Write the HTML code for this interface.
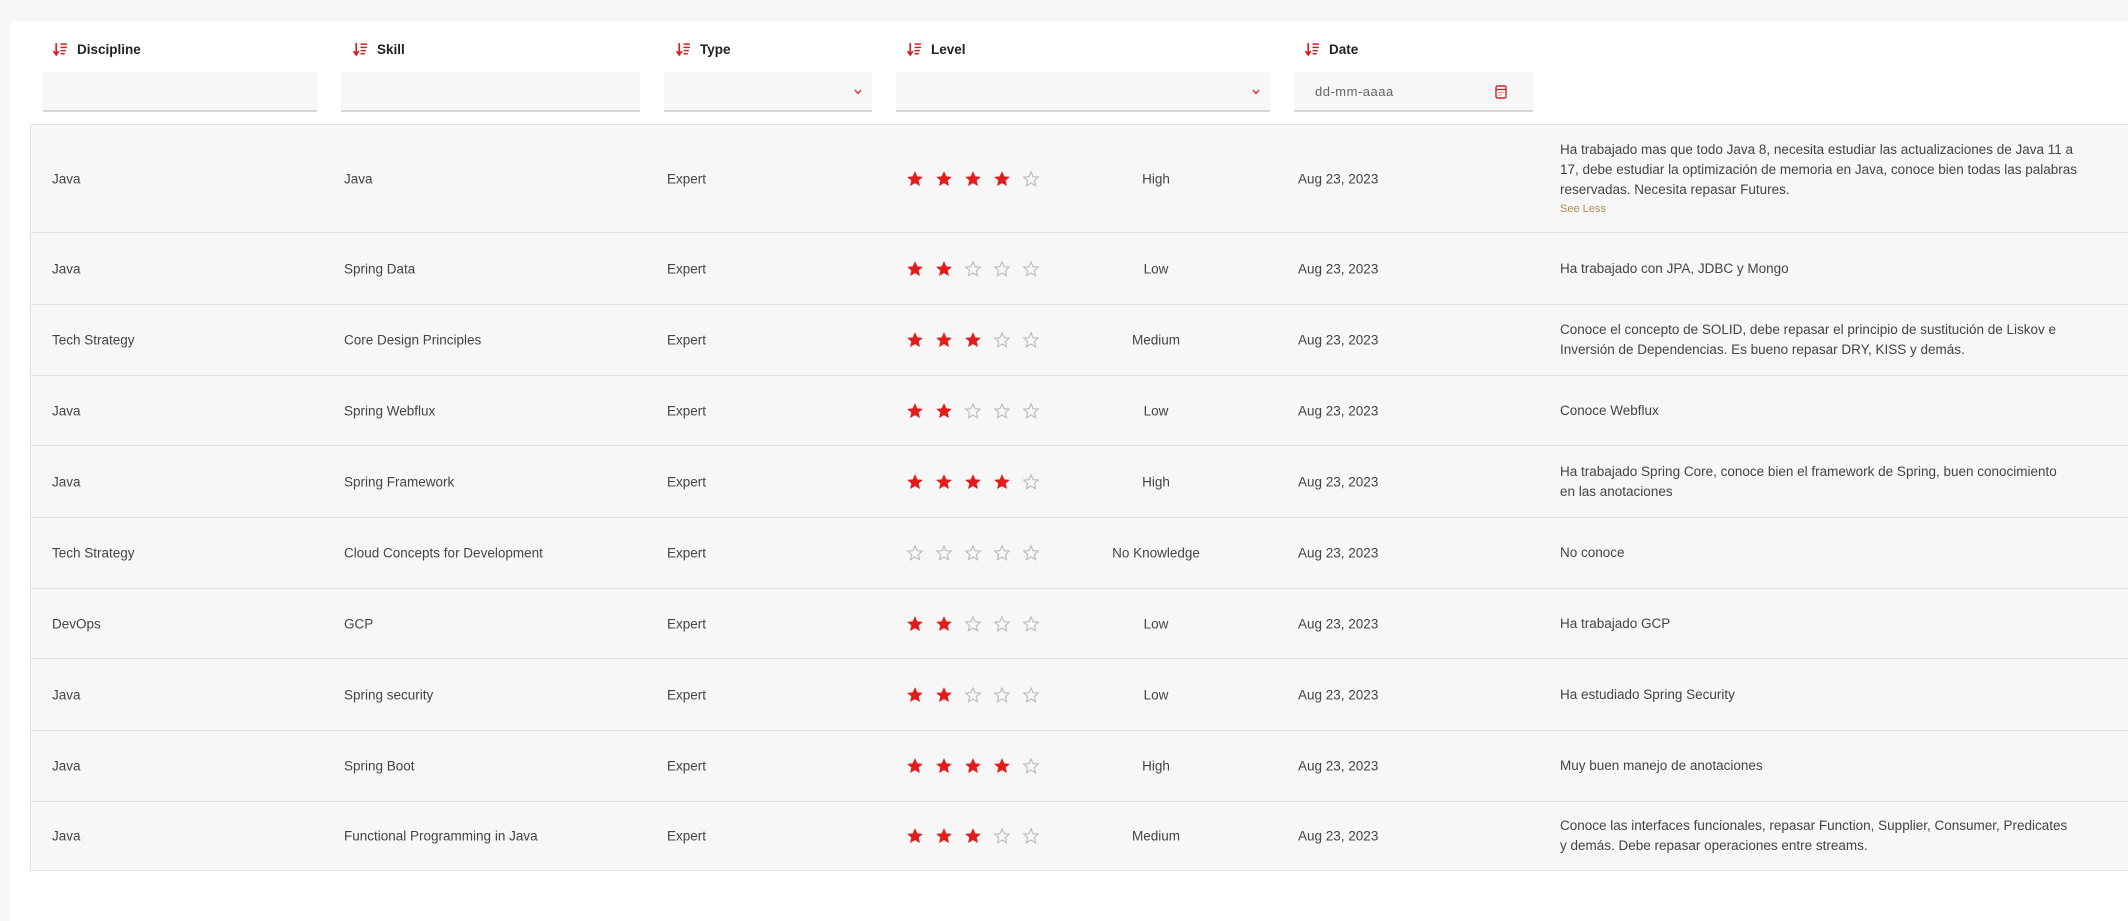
<!DOCTYPE html>
<html><head><meta charset="utf-8"><style>
*{margin:0;padding:0;box-sizing:border-box}
body{width:2128px;height:878px;background:#f7f7f7;font-family:"Liberation Sans",sans-serif;color:#333;position:relative;overflow:hidden}
.card{position:absolute;left:10px;top:21px;width:2200px;height:900px;background:#fff}
.h{position:absolute;top:42px;font-size:13.5px;font-weight:bold;color:#222;display:flex;align-items:center}
.h svg{margin-right:9px}
.inp{position:absolute;top:72px;height:40px;background:#f7f7f7;border-bottom:2px solid #d6d6d6}
.row{position:absolute;left:30px;width:2200px;background:#f7f7f7;border:1px solid #e2e2e2;border-bottom:none;font-size:13.5px;color:#444}
.row>div{position:absolute;top:50%;transform:translateY(-50%)}
.c1{left:21px}.c2{left:313px}.c3{left:636px}.c5{left:1080px;width:90px;text-align:center}.c6{left:1267px}.c7{left:1529px;width:521px;line-height:20px}
.stars{left:875px;display:flex;gap:11px}
.see{font-size:11px;color:#b08a55;display:block;line-height:18px}
</style></head><body>
<div class="card"></div>
<svg width="0" height="0" style="position:absolute"><defs>
<symbol id="sort" viewBox="0 0 14 14"><path d="M3 1v10M0.5 8.5L3 12l2.5-3.5" stroke="#d71f26" stroke-width="1.6" fill="none"/><path d="M7 2h6M7 5h6M7 8h5M7 11h4" stroke="#d71f26" stroke-width="1.4"/></symbol>
<symbol id="sf" viewBox="0 0 24 24"><path d="M12 1.5l3.1 7 7.4.6-5.6 4.9 1.7 7.4L12 17.5l-6.6 3.9 1.7-7.4L1.5 9.1l7.4-.6z" fill="#e41b1b"/></symbol>
<symbol id="se" viewBox="0 0 24 24"><path d="M12 2.5l2.8 6.4 6.9.6-5.2 4.6 1.6 6.8L12 17.3l-6.1 3.6 1.6-6.8-5.2-4.6 6.9-.6z" fill="none" stroke="#bbb" stroke-width="1.5"/></symbol>
</defs></svg>
<div class="h" style="left:53px"><svg width="15" height="15"><use href="#sort"/></svg>Discipline</div>
<div class="h" style="left:353px"><svg width="15" height="15"><use href="#sort"/></svg>Skill</div>
<div class="h" style="left:676px"><svg width="15" height="15"><use href="#sort"/></svg>Type</div>
<div class="h" style="left:907px"><svg width="15" height="15"><use href="#sort"/></svg>Level</div>
<div class="h" style="left:1305px"><svg width="15" height="15"><use href="#sort"/></svg>Date</div>
<div class="inp" style="left:43px;width:274px"></div>
<div class="inp" style="left:341px;width:299px"></div>
<div class="inp" style="left:664px;width:208px"><svg style="position:absolute;right:10px;top:17px" width="8" height="6" viewBox="0 0 8 6"><path d="M1 1l3 3.5L7 1" stroke="#d71f26" stroke-width="1.3" fill="none"/></svg></div>
<div class="inp" style="left:896px;width:374px"><svg style="position:absolute;right:10px;top:17px" width="8" height="6" viewBox="0 0 8 6"><path d="M1 1l3 3.5L7 1" stroke="#d71f26" stroke-width="1.3" fill="none"/></svg></div>
<div class="inp" style="left:1294px;width:239px"><span style="position:absolute;left:21px;top:12px;color:#666;font-family:'Liberation Sans',sans-serif;font-size:13px;letter-spacing:0.5px">dd-mm-aaaa</span><svg style="position:absolute;right:26px;top:13px" width="12" height="14" viewBox="0 0 12 14"><rect x="1" y="1" width="10" height="12" rx="1.5" fill="none" stroke="#d71f26" stroke-width="1.4"/><path d="M1 4.5h10" stroke="#d71f26" stroke-width="1.4"/><path d="M3.5 7.5h1M5.5 7.5h1M7.5 7.5h1M3.5 10h1M5.5 10h1" stroke="#d71f26"/></svg></div>

<div class="row" style="top:124px;height:108px"><div class="c1">Java</div><div class="c2">Java</div><div class="c3">Expert</div><div class="stars"><svg width="18" height="18"><use href="#sf"/></svg><svg width="18" height="18"><use href="#sf"/></svg><svg width="18" height="18"><use href="#sf"/></svg><svg width="18" height="18"><use href="#sf"/></svg><svg width="18" height="18"><use href="#se"/></svg></div><div class="c5">High</div><div class="c6">Aug 23, 2023</div><div class="c7">Ha trabajado mas que todo Java 8, necesita estudiar las actualizaciones de Java 11 a 17, debe estudiar la optimización de memoria en Java, conoce bien todas las palabras reservadas. Necesita repasar Futures.<span class="see">See Less</span></div></div>

<div class="row" style="top:232px;height:72px"><div class="c1">Java</div><div class="c2">Spring Data</div><div class="c3">Expert</div><div class="stars"><svg width="18" height="18"><use href="#sf"/></svg><svg width="18" height="18"><use href="#sf"/></svg><svg width="18" height="18"><use href="#se"/></svg><svg width="18" height="18"><use href="#se"/></svg><svg width="18" height="18"><use href="#se"/></svg></div><div class="c5">Low</div><div class="c6">Aug 23, 2023</div><div class="c7">Ha trabajado con JPA, JDBC y Mongo</div></div>

<div class="row" style="top:304px;height:71px"><div class="c1">Tech Strategy</div><div class="c2">Core Design Principles</div><div class="c3">Expert</div><div class="stars"><svg width="18" height="18"><use href="#sf"/></svg><svg width="18" height="18"><use href="#sf"/></svg><svg width="18" height="18"><use href="#sf"/></svg><svg width="18" height="18"><use href="#se"/></svg><svg width="18" height="18"><use href="#se"/></svg></div><div class="c5">Medium</div><div class="c6">Aug 23, 2023</div><div class="c7">Conoce el concepto de SOLID, debe repasar el principio de sustitución de Liskov e Inversión de Dependencias. Es bueno repasar DRY, KISS y demás.</div></div>

<div class="row" style="top:375px;height:70px"><div class="c1">Java</div><div class="c2">Spring Webflux</div><div class="c3">Expert</div><div class="stars"><svg width="18" height="18"><use href="#sf"/></svg><svg width="18" height="18"><use href="#sf"/></svg><svg width="18" height="18"><use href="#se"/></svg><svg width="18" height="18"><use href="#se"/></svg><svg width="18" height="18"><use href="#se"/></svg></div><div class="c5">Low</div><div class="c6">Aug 23, 2023</div><div class="c7">Conoce Webflux</div></div>

<div class="row" style="top:445px;height:72px"><div class="c1">Java</div><div class="c2">Spring Framework</div><div class="c3">Expert</div><div class="stars"><svg width="18" height="18"><use href="#sf"/></svg><svg width="18" height="18"><use href="#sf"/></svg><svg width="18" height="18"><use href="#sf"/></svg><svg width="18" height="18"><use href="#sf"/></svg><svg width="18" height="18"><use href="#se"/></svg></div><div class="c5">High</div><div class="c6">Aug 23, 2023</div><div class="c7">Ha trabajado Spring Core, conoce bien el framework de Spring, buen conocimiento<br>en las anotaciones</div></div>

<div class="row" style="top:517px;height:71px"><div class="c1">Tech Strategy</div><div class="c2">Cloud Concepts for Development</div><div class="c3">Expert</div><div class="stars"><svg width="18" height="18"><use href="#se"/></svg><svg width="18" height="18"><use href="#se"/></svg><svg width="18" height="18"><use href="#se"/></svg><svg width="18" height="18"><use href="#se"/></svg><svg width="18" height="18"><use href="#se"/></svg></div><div class="c5" style="left:1070px;width:110px">No Knowledge</div><div class="c6">Aug 23, 2023</div><div class="c7">No conoce</div></div>

<div class="row" style="top:588px;height:70px"><div class="c1">DevOps</div><div class="c2">GCP</div><div class="c3">Expert</div><div class="stars"><svg width="18" height="18"><use href="#sf"/></svg><svg width="18" height="18"><use href="#sf"/></svg><svg width="18" height="18"><use href="#se"/></svg><svg width="18" height="18"><use href="#se"/></svg><svg width="18" height="18"><use href="#se"/></svg></div><div class="c5">Low</div><div class="c6">Aug 23, 2023</div><div class="c7">Ha trabajado GCP</div></div>

<div class="row" style="top:658px;height:72px"><div class="c1">Java</div><div class="c2">Spring security</div><div class="c3">Expert</div><div class="stars"><svg width="18" height="18"><use href="#sf"/></svg><svg width="18" height="18"><use href="#sf"/></svg><svg width="18" height="18"><use href="#se"/></svg><svg width="18" height="18"><use href="#se"/></svg><svg width="18" height="18"><use href="#se"/></svg></div><div class="c5">Low</div><div class="c6">Aug 23, 2023</div><div class="c7">Ha estudiado Spring Security</div></div>

<div class="row" style="top:730px;height:71px"><div class="c1">Java</div><div class="c2">Spring Boot</div><div class="c3">Expert</div><div class="stars"><svg width="18" height="18"><use href="#sf"/></svg><svg width="18" height="18"><use href="#sf"/></svg><svg width="18" height="18"><use href="#sf"/></svg><svg width="18" height="18"><use href="#sf"/></svg><svg width="18" height="18"><use href="#se"/></svg></div><div class="c5">High</div><div class="c6">Aug 23, 2023</div><div class="c7">Muy buen manejo de anotaciones</div></div>

<div class="row" style="top:801px;height:70px;border-bottom:1px solid #e2e2e2"><div class="c1">Java</div><div class="c2">Functional Programming in Java</div><div class="c3">Expert</div><div class="stars"><svg width="18" height="18"><use href="#sf"/></svg><svg width="18" height="18"><use href="#sf"/></svg><svg width="18" height="18"><use href="#sf"/></svg><svg width="18" height="18"><use href="#se"/></svg><svg width="18" height="18"><use href="#se"/></svg></div><div class="c5">Medium</div><div class="c6">Aug 23, 2023</div><div class="c7">Conoce las interfaces funcionales, repasar Function, Supplier, Consumer, Predicates<br>y demás. Debe repasar operaciones entre streams.</div></div>
</body></html>
